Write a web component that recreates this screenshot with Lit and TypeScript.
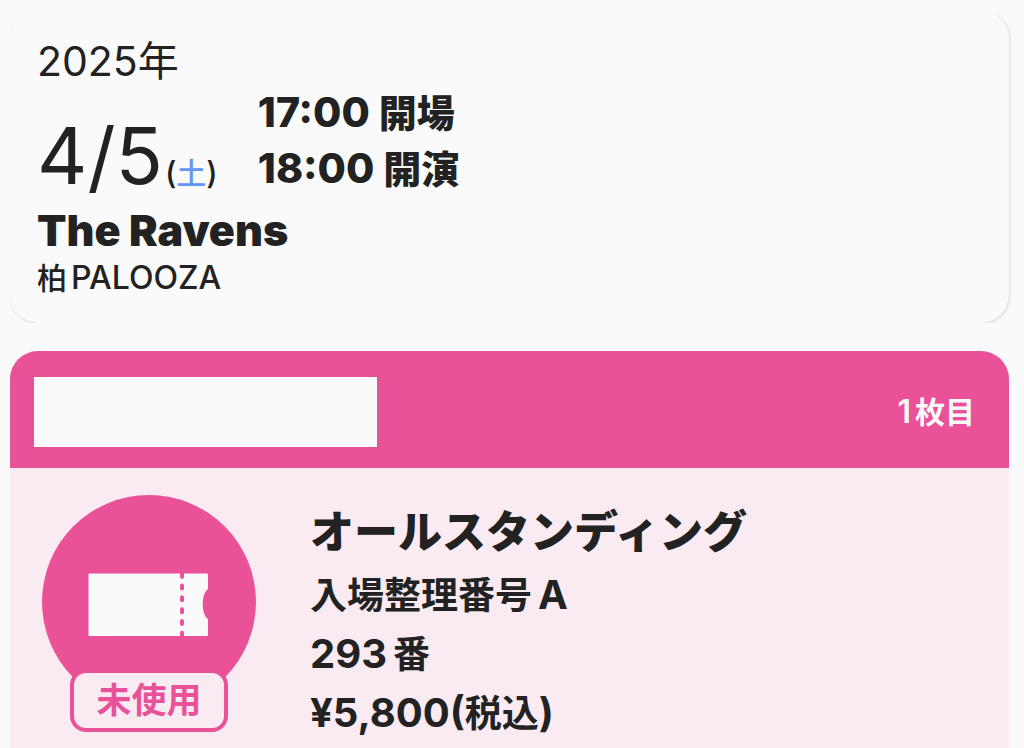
import { LitElement, html, css } from "lit";
import { customElement, property } from "lit/decorators.js";

@customElement("ticket-badge")
class TicketBadge extends LitElement {
  @property() label = "";

  static styles = css`
    :host {
      display: flex;
      flex-direction: column;
      align-items: center;
      width: 214px;
      flex: none;
    }
    .disc {
      display: block;
      width: 214px;
      height: 214px;
    }
    .label {
      box-sizing: border-box;
      width: 158px;
      margin-top: -40px;
      border: 4px solid #e95298;
      border-radius: 16px;
      background: #faebf3;
      color: #e95298;
      font-size: 35px;
      font-weight: 700;
      line-height: 55px;
      text-align: center;
      z-index: 1;
    }
  `;

  render() {
    return html`
      <svg class="disc" viewBox="0 0 214 214" aria-hidden="true">
        <circle cx="107" cy="107" r="107" fill="#e95298" />
        <path
          fill="#fafafa"
          d="M47.5 78.5H165a1 1 0 0 1 1 1V94C159 99 159 119 166 124V140a1 1 0 0 1-1 1H47.5a1 1 0 0 1-1-1V79.500a1 1 0 0 1 1-1z"
        />
        <g fill="#e95298">
          <path d="M138 78h4v3.500a2 2.500 0 0 1-4 0z" />
          <rect x="138" y="88.500" width="4" height="7" rx="2" />
          <rect x="138" y="100.300" width="4" height="7" rx="2" />
          <rect x="138" y="112.200" width="4" height="7" rx="2" />
          <rect x="138" y="124" width="4" height="7" rx="2" />
          <path d="M138 141.500h4V138a2 2.500 0 0 0-4 0z" />
        </g>
      </svg>
      <span class="label">${this.label}</span>
    `;
  }
}

@customElement("app-root")
class AppRoot extends LitElement {
  static styles = css`
    :host {
      box-sizing: border-box;
      display: flex;
      flex-direction: column;
      gap: 28px;
      min-height: 100vh;
      padding: 10px 15px 0 10px;
      background: #fafafa;
      color: #222;
      font-family: Inter, "Noto Sans CJK JP", sans-serif;
    }
    h1,
    h2,
    p {
      margin: 0;
    }
    .event {
      padding: 26px 27px 25px;
      border-radius: 28px;
      background: #fafafa;
      box-shadow: 1px 1px 3px rgba(0, 0, 0, 0.14);
      clip-path: inset(4px -4px 0 0);
    }
    .schedule {
      display: flex;
      align-items: flex-end;
      gap: 40px;
      margin-bottom: 8px;
    }
    .when {
      display: flex;
      flex-direction: column;
      gap: 30px;
    }
    .year {
      font-size: 41px;
      line-height: 50px;
    }
    .date {
      font-size: 78px;
      line-height: 80px;
      white-space: nowrap;
    }
    .weekday {
      margin-left: 2px;
      font-size: 31px;
      line-height: 40px;
      font-weight: 500;
    }
    .saturday {
      font-size: 30px;
      color: #6495f5;
    }
    .times {
      font-size: 41px;
      line-height: 56px;
      font-weight: 800;
    }
    .kanji {
      font-size: 38px;
      line-height: 40px;
    }
    .artist {
      font-size: 43px;
      line-height: 52px;
      font-weight: 900;
    }
    .venue {
      display: flex;
      align-items: baseline;
      gap: 4px;
      margin-top: 2px;
      font-size: 32px;
      line-height: 40px;
      font-weight: 500;
    }
    .place {
      font-size: 30px;
    }
    .ticket {
      display: flex;
      flex-direction: column;
      flex: 1;
      border-radius: 28px 28px 0 0;
      background: #faebf3;
      overflow: hidden;
    }
    .head {
      display: flex;
      justify-content: space-between;
      align-items: center;
      padding: 26px 34px 21px 24px;
      background: #e95298;
      color: #fafafa;
    }
    .holder {
      width: 343px;
      height: 70px;
      background: #fafafa;
    }
    .count {
      display: flex;
      align-items: baseline;
      gap: 4px;
      font-size: 32px;
      line-height: 38px;
      font-weight: 600;
    }
    .unit {
      font-size: 30px;
    }
    .body {
      display: flex;
      gap: 54px;
      padding: 27px 32px 0;
    }
    .info {
      margin-top: 7px;
      font-size: 40px;
      line-height: 59px;
      font-weight: 700;
    }
    .seat {
      margin-bottom: 3px;
      font-size: 44px;
      line-height: 60px;
      font-weight: 900;
    }
    .row {
      display: flex;
      align-items: baseline;
      gap: 6px;
    }
    .term {
      font-size: 37px;
      font-weight: 600;
      line-height: 40px;
    }
  `;

  render() {
    return html`
      <section class="event">
        <div class="schedule">
          <div class="when">
            <div class="year">2025年</div>
            <div class="date">4/5<span class="weekday">(<span class="saturday">土</span>)</span></div>
          </div>
          <div class="times">
            <div>17:00 <span class="kanji">開場</span></div>
            <div>18:00 <span class="kanji">開演</span></div>
          </div>
        </div>
        <h1 class="artist">The Ravens</h1>
        <p class="venue"><span class="place">柏</span><span>PALOOZA</span></p>
      </section>
      <section class="ticket">
        <header class="head">
          <div class="holder"></div>
          <div class="count"><span>1</span><span class="unit">枚目</span></div>
        </header>
        <div class="body">
          <ticket-badge label="未使用"></ticket-badge>
          <div class="info">
            <h2 class="seat">オールスタンディング</h2>
            <p class="row"><span class="term">入場整理番号</span><span>A</span></p>
            <p class="row"><span>293</span><span class="term">番</span></p>
            <p>¥5,800(<span class="term">税込</span>)</p>
          </div>
        </div>
      </section>
    `;
  }
}
